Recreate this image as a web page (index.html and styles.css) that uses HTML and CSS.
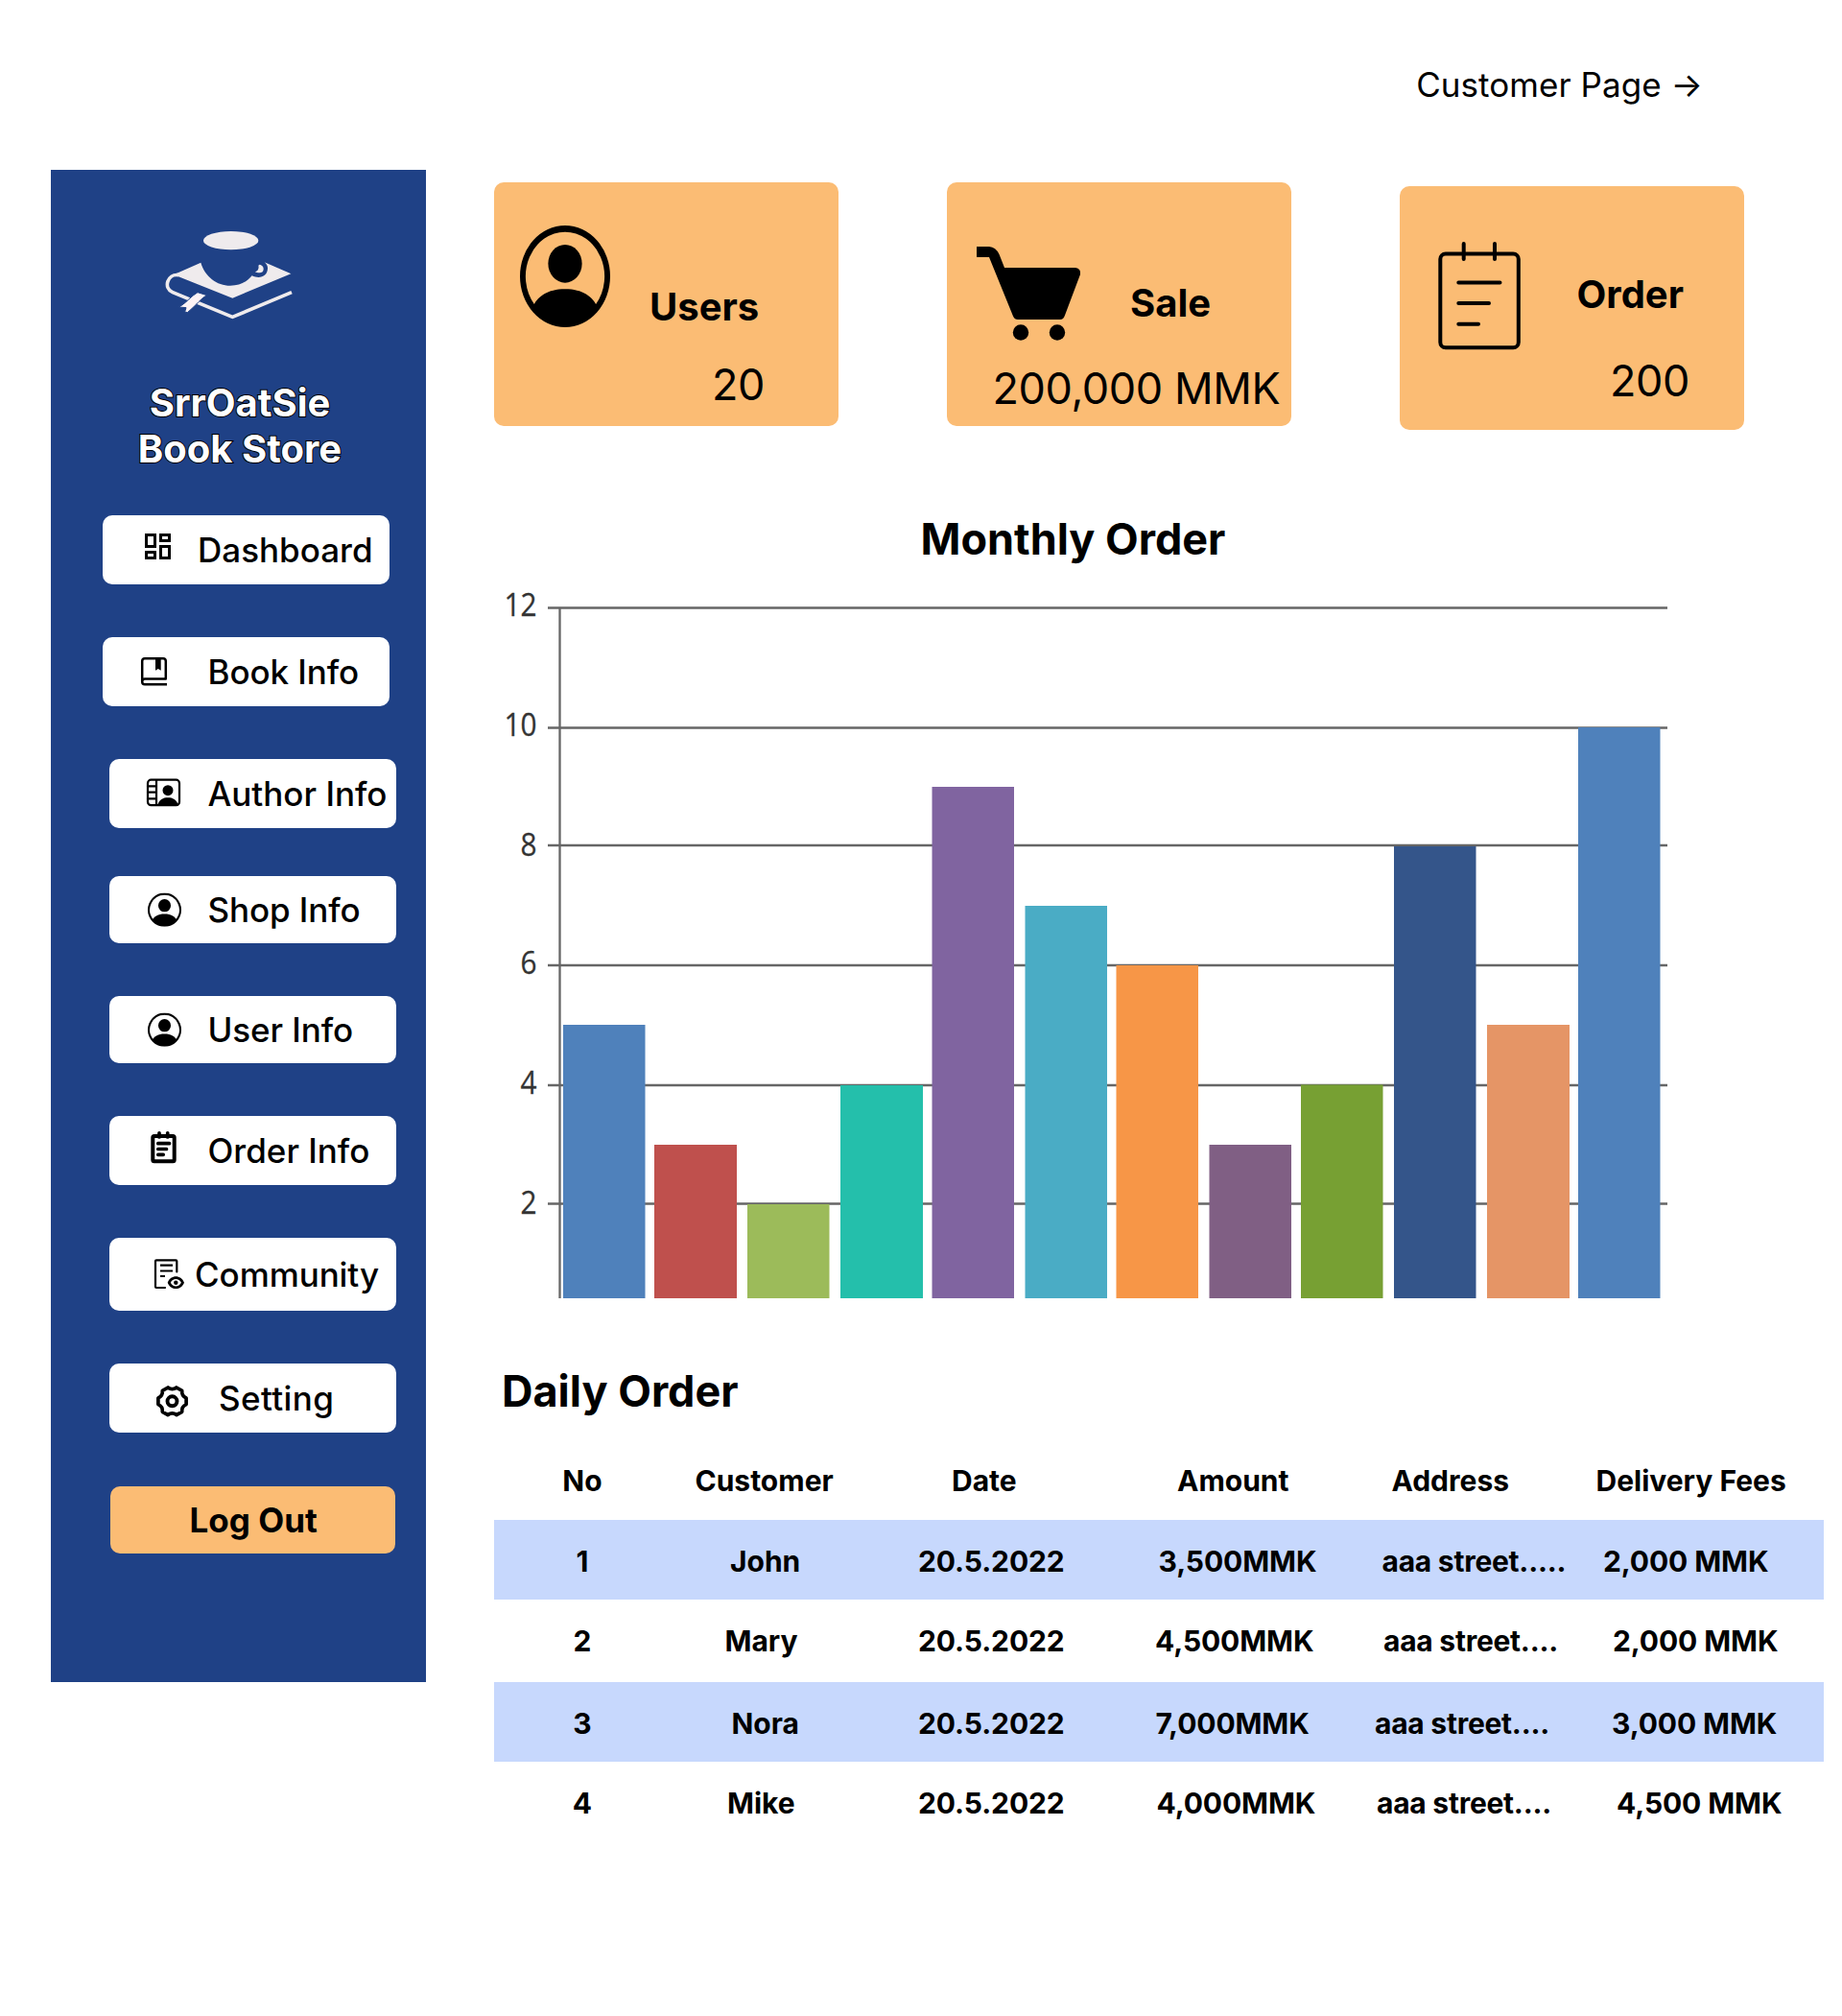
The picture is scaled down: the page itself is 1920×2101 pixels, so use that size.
FILE: index.html
```html
<!DOCTYPE html>
<html lang="en">
<head>
<meta charset="utf-8">
<title>SrrOatSie Book Store</title>
<link rel="stylesheet" href="styles.css">
</head>
<body>
<svg class="defs" width="0" height="0">
  <symbol id="person" viewBox="0 0 16 16" preserveAspectRatio="none">
    <path d="M11 6a3 3 0 1 1-6 0 3 3 0 0 1 6 0z"/>
    <path fill-rule="evenodd" d="M0 8a8 8 0 1 1 16 0A8 8 0 0 1 0 8zm8-7a7 7 0 0 0-5.468 11.37C3.242 11.226 4.805 10 8 10s4.757 1.225 5.468 2.37A7 7 0 0 0 8 1z"/>
  </symbol>
</svg>
<header class="topbar"><a class="customer-link">Customer Page →</a></header>
<div class="page">
  <aside class="sidebar">
    <svg class="logo" viewBox="398 240 402 276">
      <ellipse cx="604" cy="272" rx="86" ry="29"/>
      <path d="M510 341C523 385 560 413 602 413C635 413 655 400 670 382C692 393 719 386 719 358C719 350 715 345 709 340L792 376L609 452L440 385L425 379Z"/>
      <path d="M694 347C706 350 709 361 703 370C696 375 685 373 680 370C690 366 692 358 690 350Z"/>
      <path class="logo-line" d="M440 380C405 375 392 421 422 434L609 511L794 434"/>
      <path class="logo-mark" d="M500 434L529 443C508 455 500 470 468 497L460 495L464 482L442 480C466 466 480 445 500 434Z"/>
    </svg>
    <h1 class="brand">SrrOatSie<br>Book Store</h1>
    <nav class="menu">
      <a class="item item-dashboard"><svg class="icon" viewBox="0 0 40 40"><path transform="translate(3.5 -1.5) scale(1.5)" d="M19 5v2h-4V5h4M9 5v6H5V5h4m10 8v6h-4v-6h4M9 17v2H5v-2h4M21 3h-8v6h8V3zM11 3H3v10h8V3zm10 8h-8v10h8V11zm-10 4H3v6h8v-6z"/></svg><span>Dashboard</span></a>
      <a class="item item-book"><svg class="icon" viewBox="0 0 40 40"><path class="line butt" stroke-width="2.5" d="M31 33.200H8a2.800 2.800 0 0 1-2.800-2.800V9A2.800 2.800 0 0 1 8 6.300H27A2.800 2.800 0 0 1 29.800 9V27.400H8A2.800 2.800 0 0 0 5.200 30.200"/><path d="M19 7h5.700v11.700l-2.850-1.700l-2.850 1.700z"/></svg><span>Book Info</span></a>
      <a class="item item-author"><svg class="icon" viewBox="0 0 40 40"><rect class="line" stroke-width="2.2" x="4" y="5.700" width="33" height="26.500" rx="3.500"/><path class="line" stroke-width="2.200" d="M13 6V32M4 12.300H13M4 18.600H13M4 25.300H13"/><circle cx="25" cy="16.700" r="5.500"/><path d="M14 32.500C16 26 20 24.300 25 24.300S34 26 36 32.500Z"/></svg><span>Author Info</span></a>
      <a class="item item-shop"><svg class="icon" viewBox="0 0 40 40"><use href="#person" x="4" y="2.500" width="35" height="35.300"/></svg><span>Shop Info</span></a>
      <a class="item item-user"><svg class="icon" viewBox="0 0 40 40"><use href="#person" x="4" y="2.500" width="35" height="35.300"/></svg><span>User Info</span></a>
      <a class="item item-order"><svg class="icon" viewBox="0 0 40 40"><rect class="line" stroke-width="4" x="9.300" y="5" width="22.400" height="26.300" rx="1.500"/><path class="line" stroke-width="3.700" d="M16 1.800V6M24.700 1.800V6M14.800 12.700H26.500M14.800 18.500H23.500M14.800 24.300H20.200"/></svg><span>Order Info</span></a>
      <a class="item item-community"><svg class="icon" viewBox="0 0 40 40"><path class="line" stroke-width="2.200" d="M34.300 17.500V6.300a1 1 0 0 0-1-1H13a1 1 0 0 0-1 1V33a1 1 0 0 0 1 1H22"/><path class="line butt" stroke-width="2.200" d="M17 10.700H30M17 16.500H30M17 22H22"/><path fill-rule="evenodd" d="M24.700 28.700C28 20.200 38.600 20.200 42 28.700C38.600 37.200 28 37.200 24.700 28.700ZM27.800 28.700C30 33.600 36.600 33.600 38.900 28.700C36.600 23.800 30 23.800 27.800 28.700Z"/><circle cx="33.300" cy="28.700" r="2.200"/></svg><span>Community</span></a>
      <a class="item item-setting"><svg class="icon" viewBox="0 0 40 40"><g transform="translate(29.500 23.300)"><path class="line" stroke-width="3.700" d="M14.600-3.300V3.300Q9.600 5.500 10.200 11L4.400 14.300Q0 11 -4.400 14.300L-10.200 11Q-9.600 5.500-14.600 3.300V-3.300Q-9.600-5.500-10.200-11L-4.400-14.300Q0-11 4.400-14.300L10.200-11Q9.600-5.500 14.600-3.300Z"/><circle class="line" stroke-width="3.900" r="5"/></g></svg><span>Setting</span></a>
      <a class="item item-logout">Log Out</a>
    </nav>
  </aside>
  <main class="content">
    <section class="cards">
      <article class="card card-users">
        <div class="card-head">
          <svg class="card-icon" width="94" height="106" viewBox="0 0 94 106"><use href="#person" width="94" height="106"/></svg>
          <h2 class="card-label">Users</h2>
        </div>
        <p class="card-value">20</p>
      </article>
      <article class="card card-sale">
        <div class="card-head">
          <svg class="card-icon" width="108" height="98" viewBox="0 0 108 98"><path d="M0 0H13Q20 .5 23.500 8L29 22H103Q109 23 108 29L92 71.500Q90.500 76 87 76H43Q39.500 76 38 72.500L13 11H0Z"/><circle cx="46" cy="89.500" r="8.200"/><circle cx="84" cy="89.500" r="8.200"/></svg>
          <h2 class="card-label">Sale</h2>
        </div>
        <p class="card-value">200,000 MMK</p>
      </article>
      <article class="card card-order">
        <div class="card-head">
          <svg class="card-icon" width="88" height="114" viewBox="0 0 88 114"><rect class="line" stroke-width="4" x="2.300" y="12.500" width="81.500" height="97.700" rx="5.500"/><path class="line" stroke-width="4" d="M26.700 2V18M59 2V18M21.300 42.500H64.500M21.300 64H53M21.300 85.700H42"/></svg>
          <h2 class="card-label">Order</h2>
        </div>
        <p class="card-value">200</p>
      </article>
    </section>
    <section class="monthly">
      <h2 class="monthly-title">Monthly Order</h2>
      <svg class="chart" width="1230" height="743" viewBox="515 610 1230 743">
        <path class="grid" d="M571 633.500H1738M571 758.500H1738M571 881H1738M571 1006H1738M571 1131H1738M571 1254.500H1738M583.500 633V1353"/>
        <g>
          <rect x="587" y="1068" width="85.500" height="285" fill="#4f81bb"/>
          <rect x="682" y="1193" width="86" height="160" fill="#bf504d"/>
          <rect x="779" y="1255" width="85.500" height="98" fill="#9cbb5a"/>
          <rect x="876" y="1131" width="86" height="222" fill="#24bfab"/>
          <rect x="971.500" y="820" width="85.500" height="533" fill="#8064a0"/>
          <rect x="1068.500" y="944" width="85.500" height="409" fill="#4aacc5"/>
          <rect x="1163.500" y="1006" width="85.500" height="347" fill="#f79647"/>
          <rect x="1260.500" y="1193" width="85.500" height="160" fill="#805f84"/>
          <rect x="1356" y="1130.500" width="85.500" height="222.500" fill="#77a033"/>
          <rect x="1453" y="882" width="85.500" height="471" fill="#34558a"/>
          <rect x="1550" y="1068" width="86" height="285" fill="#e59566"/>
          <rect x="1645" y="758" width="85.500" height="595" fill="#4f81bb"/>
        </g>
        <g class="ticks">
          <text x="559.500" y="642" textLength="34" lengthAdjust="spacingAndGlyphs">12</text>
          <text x="559.500" y="767" textLength="34" lengthAdjust="spacingAndGlyphs">10</text>
          <text x="559.500" y="892" textLength="17" lengthAdjust="spacingAndGlyphs">8</text>
          <text x="559.500" y="1015" textLength="17" lengthAdjust="spacingAndGlyphs">6</text>
          <text x="559.500" y="1140" textLength="17" lengthAdjust="spacingAndGlyphs">4</text>
          <text x="559.500" y="1265" textLength="17" lengthAdjust="spacingAndGlyphs">2</text>
        </g>
      </svg>
    </section>
    <section class="daily">
      <h2 class="daily-title">Daily Order</h2>
      <div class="table">
        <div class="row head"><span>No</span><span>Customer</span><span>Date</span><span>Amount</span><span>Address</span><span>Delivery Fees</span></div>
        <div class="row r1"><span>1</span><span>John</span><span>20.5.2022</span><span>3,500MMK</span><span>aaa street.....</span><span>2,000 MMK</span></div>
        <div class="row r2"><span>2</span><span>Mary</span><span>20.5.2022</span><span>4,500MMK</span><span>aaa street....</span><span>2,000 MMK</span></div>
        <div class="row r3"><span>3</span><span>Nora</span><span>20.5.2022</span><span>7,000MMK</span><span>aaa street....</span><span>3,000 MMK</span></div>
        <div class="row r4"><span>4</span><span>Mike</span><span>20.5.2022</span><span>4,000MMK</span><span>aaa street....</span><span>4,500 MMK</span></div>
      </div>
    </section>
  </main>
</div>
</body>
</html>
```
FILE: styles.css
```css
* { box-sizing: border-box; }
body { margin: 0; min-height: 2101px; background: #fff; color: #000; font-family: Inter, "Liberation Sans", sans-serif; }
h1, h2, p { margin: 0; }
svg { display: block; flex: none; overflow: visible; }
.defs { position: absolute; }
.line { fill: none; stroke: #000; stroke-linecap: round; stroke-linejoin: round; }
.butt { stroke-linecap: butt; }

.topbar { height: 177px; padding: 67px 145px 0 0; display: flex; justify-content: flex-end; }
.customer-link { font-size: 35px; line-height: 42px; font-weight: 400; letter-spacing: .05px; white-space: nowrap; }

.page { display: flex; align-items: flex-start; padding-left: 53px; }
.sidebar { flex: none; width: 391px; height: 1576px; padding-top: 63px; background: #1f4186; }
.logo { width: 134px; height: 92px; margin-left: 119px; fill: #efebed; }
.logo-line { fill: none; stroke: #efebed; stroke-width: 11; stroke-linejoin: round; }
.logo-mark { fill: #fdf3f5; stroke: #1f4186; stroke-width: 3; }
.brand { margin: 64px 0 0 3px; font-size: 40px; line-height: 48px; font-weight: 700; text-align: center; color: #fff; -webkit-text-stroke: 2px #000; paint-order: stroke fill; }

.menu { display: flex; flex-direction: column; padding: 45px 31px 0 61px; }
.item { display: flex; align-items: center; width: 299px; height: 72px; padding-left: 36px; border-radius: 10px; background: #fff; font-size: 35px; line-height: 42px; font-weight: 500; white-space: nowrap; }
.icon { width: 40px; height: 40px; margin-right: 26.500px; }
.item-dashboard, .item-book { margin-left: -7px; }
.item-dashboard .icon { margin-right: 23px; }
.item-book { margin-top: 55px; }
.item-book .icon { margin-right: 33.500px; }
.item-author { margin-top: 55px; }
.item-shop { margin-top: 50px; height: 70px; }
.item-user { margin-top: 55px; height: 70px; }
.item-order { margin-top: 55px; }
.item-community { margin-top: 55px; height: 76px; }
.item-community .icon { margin-right: 13px; }
.item-book, .item-shop, .item-user, .item-community { letter-spacing: -.08px; }
.item-setting { margin-top: 55px; letter-spacing: .4px; }
.item-setting .icon { margin-right: 38px; }
.item-logout { margin: 56px 0 0 1px; width: 297px; height: 70px; padding-left: 82.500px; background: #fbbc74; font-weight: 700; }

.content { flex: none; width: 1405px; padding: 13px 0 0 71px; }
.cards { display: flex; align-items: flex-start; gap: 113px; }
.card { flex: none; width: 359px; height: 254px; border-radius: 10px; background: #fbbc74; }
.card-head { display: flex; align-items: flex-start; height: 175px; }
.card-label { font-size: 40px; line-height: 48px; font-weight: 700; }
.card-value { font-size: 45px; line-height: 54px; font-weight: 400; letter-spacing: -.4px; white-space: nowrap; }
.card-users .card-icon { margin: 45px 0 0 27px; }
.card-users .card-label { margin: 105.500px 0 0 41px; }
.card-users .card-value { margin: 8.500px 0 0 227px; }
.card-sale .card-icon { margin: 67px 0 0 31px; }
.card-sale .card-label { margin: 101.500px 0 0 52px; }
.card-sale .card-value { margin: 12.500px 0 0 47.500px; }
.card-order { margin-top: 4px; }
.card-order .card-icon { margin: 58px 0 0 40px; }
.card-order .card-label { margin: 89px 0 0 56.500px; }
.card-order .card-value { margin: 1px 0 0 219px; }

.monthly { margin-top: 87px; }
.monthly-title { margin-left: 444.500px; font-size: 45px; line-height: 54px; font-weight: 700; }
.chart { margin-top: 21px; }
.grid { fill: none; stroke: #666; stroke-width: 2.300; }
.ticks { font: 32px "Open Sans", sans-serif; fill: #333; stroke: #333; stroke-width: .3; text-anchor: end; }

.daily { padding-top: 70px; }
.daily-title { margin-left: 8px; font-size: 45px; line-height: 54px; font-weight: 700; }
.table { width: 1386px; margin-top: 24px; font-size: 30px; line-height: 36px; font-weight: 700; white-space: nowrap; }
.row { display: grid; grid-template-columns: 185px 235px 240px 230px 240px 256px; align-items: center; height: 83px; padding-top: 2px; }
.row span:first-child { padding-right: 1px; text-align: center; }
.head { padding-top: 0; }
.r1, .r3 { background: #c7d8fd; }
.r2 { height: 86px; padding-bottom: 3px; }
.head span:nth-child(2) { padding-left: 24.500px; }
.head span:nth-child(3) { padding-left: 57px; }
.head span:nth-child(4) { padding-left: 52px; }
.head span:nth-child(5) { padding-left: 45.500px; }
.head span:nth-child(6) { padding-left: 18.500px; }
.r1 span:nth-child(2) { padding-left: 61px; }
.r2 span:nth-child(2) { padding-left: 55.500px; }
.r3 span:nth-child(2) { padding-left: 62.500px; }
.r4 span:nth-child(2) { padding-left: 58px; }
.row:not(.head) span:nth-child(3) { padding-left: 22px; letter-spacing: -.1px; }
.row:not(.head) span:nth-child(4) { letter-spacing: -.1px; }
.row:not(.head) span:nth-child(5) { letter-spacing: -.25px; }
.row:not(.head) span:nth-child(6) { letter-spacing: -.1px; }
.r1 span:nth-child(4) { padding-left: 32.500px; }
.r2 span:nth-child(4) { padding-left: 29px; }
.r3 span:nth-child(4) { padding-left: 29.500px; }
.r4 span:nth-child(4) { padding-left: 30.500px; }
.r1 span:nth-child(5) { padding-left: 35.500px; }
.r2 span:nth-child(5) { padding-left: 37px; }
.r3 span:nth-child(5) { padding-left: 28px; }
.r4 span:nth-child(5) { padding-left: 30px; }
.r1 span:nth-child(6) { padding-left: 26px; }
.r2 span:nth-child(6) { padding-left: 36px; }
.r3 span:nth-child(6) { padding-left: 35px; }
.r4 span:nth-child(6) { padding-left: 40px; }
```
